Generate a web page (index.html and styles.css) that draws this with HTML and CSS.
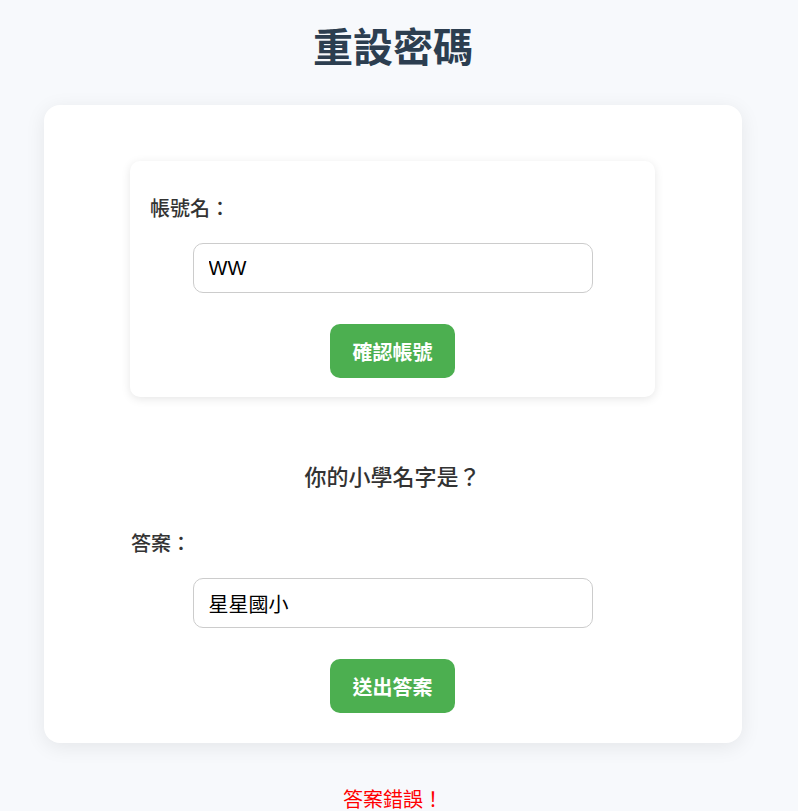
FILE: index.html
```html
<!DOCTYPE html>
<html lang="zh-Hant">
<head>
<meta charset="utf-8">
<title>重設密碼</title>
<link rel="stylesheet" href="styles.css">
</head>
<body>
<div class="page">
  <h1 class="title">重設密碼</h1>
  <div class="card">
    <div class="content">
      <div class="account-box">
        <label class="label">帳號名：</label>
        <input class="field" type="text" value="WW">
        <div class="actions"><button class="btn">確認帳號</button></div>
      </div>
      <p class="question">你的小學名字是？</p>
      <label class="label answer-label">答案：</label>
      <input class="field" type="text" value="星星國小">
      <div class="actions"><button class="btn">送出答案</button></div>
    </div>
  </div>
  <p class="error">答案錯誤！</p>
</div>
</body>
</html>
```
FILE: styles.css
```css
html, body {
  margin: 0;
  padding: 0;
  background: #f7f9fc;
}
body {
  font-family: "Liberation Sans", "Noto Sans CJK TC", sans-serif;
  color: #333;
}
.page {
  width: 698px;
  margin: 0 auto;
  padding-right: 12px;
  padding-top: 24px;
  padding-bottom: 20px;
}
.title {
  margin: 0;
  font-size: 40px;
  line-height: 48px;
  font-weight: 700;
  color: #2c3e50;
  text-align: center;
}
.card {
  margin-top: 33px;
  background: #fff;
  border-radius: 16px;
  box-shadow: 0 4px 20px rgba(0, 0, 0, 0.08);
  padding: 56px 87px 30px 86px;
}
.account-box {
  background: #fff;
  border-radius: 10px;
  box-shadow: 0 2px 10px rgba(0, 0, 0, 0.1);
  padding: 34px 20px 19px;
}
.label {
  display: block;
  font-size: 20px;
  line-height: 28px;
  font-weight: 500;
  color: #333;
}
.answer-label {
  padding-left: 1px;
}
.field {
  display: block;
  box-sizing: border-box;
  width: 400px;
  height: 50px;
  margin: 20px auto 0;
  padding: 0 15px;
  border: 1px solid #ccc;
  border-radius: 10px;
  font-family: "Liberation Sans", "Noto Sans CJK TC", sans-serif;
  font-size: 20px;
  color: #000;
  background: #fff;
}
.actions {
  display: flex;
  justify-content: center;
  margin-top: 31px;
}
.btn {
  width: 125px;
  height: 54px;
  border: none;
  border-radius: 10px;
  background: #4caf50;
  color: #fff;
  font-family: "Liberation Sans", "Noto Sans CJK TC", sans-serif;
  font-size: 20px;
  font-weight: 700;
  padding: 0;
}
.question {
  margin: 66px 0 37px;
  font-size: 22px;
  line-height: 30px;
  font-weight: 500;
  text-align: center;
  color: #333;
}
.error {
  margin: 42px 0 0;
  font-size: 20px;
  line-height: 30px;
  text-align: center;
  color: #ff0000;
}
```
